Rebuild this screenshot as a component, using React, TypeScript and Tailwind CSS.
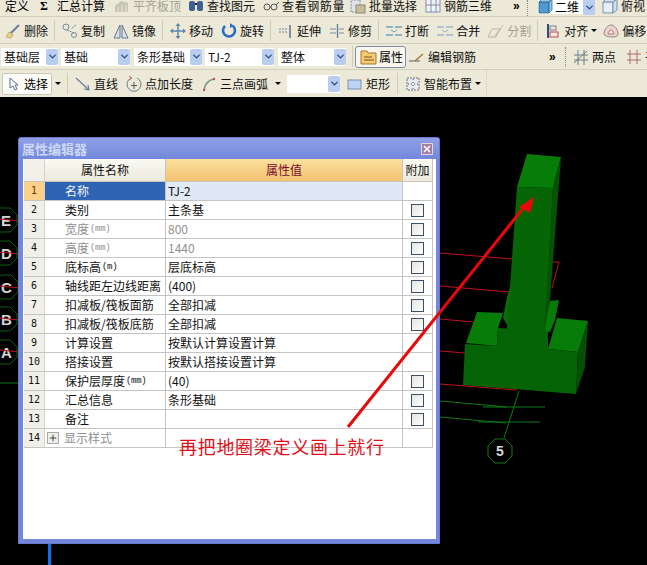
import type { ReactNode } from "react";
import { ChevronDown, Plus, X } from "lucide-react";

type Row = { name: string; unit?: string; value: string; check?: boolean; gray?: boolean };

const rows: Row[] = [
  { name: "名称", value: "TJ-2" },
  { name: "类别", value: "主条基", check: true },
  { name: "宽度", unit: "(mm)", value: "800", check: true, gray: true },
  { name: "高度", unit: "(mm)", value: "1440", check: true, gray: true },
  { name: "底标高", unit: "(m)", value: "层底标高", check: true },
  { name: "轴线距左边线距离", value: "(400)", check: true },
  { name: "扣减板/筏板面筋", value: "全部扣减", check: true },
  { name: "扣减板/筏板底筋", value: "全部扣减", check: true },
  { name: "计算设置", value: "按默认计算设置计算" },
  { name: "搭接设置", value: "按默认搭接设置计算" },
  { name: "保护层厚度", unit: "(mm)", value: "(40)", check: true },
  { name: "汇总信息", value: "条形基础", check: true },
  { name: "备注", value: "", check: true },
];

function octagon(cx: number, cy: number, r: number) {
  const pts: string[] = [];
  for (let i = 0; i < 8; i++) {
    const a = ((i + 0.5) * Math.PI) / 4;
    pts.push(`${(cx + r * Math.cos(a)).toFixed(1)},${(cy + r * Math.sin(a)).toFixed(1)}`);
  }
  return pts.join(" ");
}

function Sep(props: { className?: string }) {
  return <div className={`mx-[6px] h-[21px] w-px shrink-0 bg-[#cfccb8] ${props.className ?? ""}`} />;
}

function Caret(props: { className?: string }) {
  return <span className={`h-0 w-0 shrink-0 border-x-[3px] border-t-[3px] border-x-transparent border-t-black ${props.className ?? ""}`} />;
}

function Tool(props: { icon: ReactNode; label: string; dim?: boolean; className?: string }) {
  const { icon, label, dim, className } = props;
  return (
    <div className={`flex shrink-0 items-center gap-[2px] whitespace-nowrap ${dim ? "text-[#a5a394]" : "text-[#111]"} ${className ?? ""}`}>
      <span className="flex size-[18px] shrink-0 items-center justify-center">{icon}</span>
      <span>{label}</span>
    </div>
  );
}

function Arrow() {
  return (
    <span className="flex h-[16px] w-[12px] shrink-0 items-center justify-center rounded-[2px] bg-[#b9cdf1]">
      <ChevronDown className="size-[11px] text-[#2c4a86]" strokeWidth={3} />
    </span>
  );
}

function Combo(props: { label: string; className: string }) {
  return (
    <div className={`flex h-[18px] shrink-0 items-center justify-between bg-white pl-[3px] text-[#111] ${props.className}`}>
      <span className="whitespace-nowrap">{props.label}</span>
      <Arrow />
    </div>
  );
}

function Glyph(props: { children: ReactNode }) {
  return (
    <svg width="18" height="18" viewBox="0 0 18 18" fill="none">
      {props.children}
    </svg>
  );
}

function Toolbars() {
  return (
    <div className="h-[97px] overflow-hidden bg-[#ece9d8] font-['Noto_Sans_CJK_SC','Liberation_Sans',sans-serif] text-[12px] leading-none">
      <div className="flex h-[17px] items-start overflow-hidden border-b border-[#d2cfbc] pl-[5px]">
        <span className="shrink-0">定义</span>
        <span className="ml-[11px] w-[10px] shrink-0 font-['Liberation_Serif',serif] text-[12px] font-bold">Σ</span>
        <span className="ml-[7px] shrink-0">汇总计算</span>
        <Tool dim className="ml-[8px] -mt-[3px]" label="平齐板顶" icon={<Glyph><path d="M2 15V9l6-5 7 2v9z" fill="#c7c5b6" /><path d="M5 10v5M9 8v7M13 8v7" stroke="#ece9d8" /></Glyph>} />
        <Tool className="ml-[6px] -mt-[3px]" label="查找图元" icon={<Glyph><rect x="2" y="4" width="6" height="10" rx="2" fill="#3f5f8e" /><rect x="10" y="4" width="6" height="10" rx="2" fill="#3f5f8e" /><path d="M8 7h2" stroke="#222" strokeWidth="2" /></Glyph>} />
        <Tool className="ml-[7px] -mt-[3px] tracking-[0.6px]" label="查看钢筋量" icon={<Glyph><circle cx="5" cy="10" r="3" stroke="#555" /><circle cx="12" cy="10" r="3" stroke="#555" /><path d="M8 10h1M14 8l3-3" stroke="#555" /></Glyph>} />
        <Tool className="ml-[4px] -mt-[3px]" label="批量选择" icon={<Glyph><rect x="2" y="3" width="9" height="12" fill="#dfe3e8" stroke="#8390a6" strokeDasharray="2 1" /><rect x="7" y="8" width="9" height="8" fill="#c9bc9a" stroke="#8a8a7a" /></Glyph>} />
        <Tool className="ml-[7px] -mt-[3px]" label="钢筋三维" icon={<Glyph><rect x="2" y="2" width="14" height="13" fill="#f3f3ee" stroke="#7d8fb5" /><path d="M7 2v13M12 2v13M2 8h14" stroke="#7d8fb5" /></Glyph>} />
        <span className="ml-[21px] w-[7px] shrink-0 font-['Liberation_Sans',sans-serif] font-bold">»</span>
        <div className="ml-[7px] h-[16px] w-0 shrink-0 border-l border-dotted border-[#8d8b7e]" />
        <div className="ml-[10px] flex h-[14px] w-[57px] shrink-0 items-center bg-white">
          <svg width="15" height="14" viewBox="0 2 15 14" className="shrink-0"><path d="M1 4h10v11H1z" fill="#4f9bd1" stroke="#28577f" strokeWidth="0.7" /><path d="M1 4l3-3h10l-3 3zM11 4l3-3v11l-3 3z" fill="#8cc4ea" stroke="#28577f" strokeWidth="0.7" /></svg>
          <span className="ml-[2px] w-[28px] shrink-0">二维</span>
          <Arrow />
        </div>
        <Tool className="ml-[6px] -mt-[3px]" label="俯视" icon={<Glyph><path d="M2 5h10v11H2z" fill="#e8eef5" stroke="#7a93ab" /><path d="M2 5l3-3h11l-4 3zM12 5l4-3v11l-4 3z" fill="#cfe2f1" stroke="#7a93ab" /></Glyph>} />
      </div>
      <div className="mt-[1px] flex h-[26px] items-center overflow-hidden border-b border-[#d2cfbc] pl-[4px]">
        <Tool label="删除" icon={<Glyph><path d="M2 15l3-5 4 3-2 3z" fill="#f0d27a" stroke="#9c8a55" strokeWidth="0.6" /><path d="M7 11l8-8" stroke="#707aa0" strokeWidth="2" /></Glyph>} />
        <Sep />
        <Tool label="复制" icon={<Glyph><circle cx="5" cy="5" r="3" stroke="#7b8a9c" /><path d="M6 8l7 3M15 3l-5 4" stroke="#5e88b0" strokeDasharray="2 1" /><circle cx="13" cy="13" r="2.5" stroke="#7b8a9c" /></Glyph>} />
        <Tool className="ml-[7px]" label="镜像" icon={<Glyph><path d="M8 3v13H2zM10 3v13h6z" fill="#d9e0e8" stroke="#64768c" /></Glyph>} />
        <Sep />
        <Tool label="移动" icon={<Glyph><path d="M9 3v12M3 9h12" stroke="#5c85a8" strokeWidth="1.4" /><path d="M9 1L6.5 4h5zM9 17l-2.5-3h5zM1 9l3-2.5v5zM17 9l-3-2.5v5z" fill="#5c85a8" /></Glyph>} />
        <Tool className="ml-[7px]" label="旋转" icon={<Glyph><path d="M5 4a6 6 0 1 0 8 0" stroke="#2c6cc4" strokeWidth="2.6" /><path d="M10 1l4 3-4 2z" fill="#2c6cc4" /></Glyph>} />
        <Sep />
        <Tool label="延伸" icon={<Glyph><path d="M2 7h8M2 10h8" stroke="#71849c" strokeDasharray="2 1" /><path d="M13 3v13" stroke="#566a84" strokeWidth="1.4" /></Glyph>} />
        <Tool className="ml-[7px]" label="修剪" icon={<Glyph><path d="M2 7h6M2 11h6M11 7h5M11 11h5" stroke="#7b90a8" /><path d="M9.5 2v14" stroke="#6b8098" strokeWidth="1.4" /></Glyph>} />
        <Sep />
        <Tool label="打断" icon={<Glyph><path d="M1 5h16M1 13h16" stroke="#6fa0c0" strokeWidth="1.6" strokeDasharray="7 2" /><path d="M6 8l3 2 3-2" stroke="#6fa0c0" /></Glyph>} />
        <Tool className="ml-[7px]" label="合并" icon={<Glyph><path d="M1 5h16M1 13h16" stroke="#9eb6c7" strokeWidth="1.6" strokeDasharray="7 2" /><path d="M6 8l3 2 3-2" stroke="#9eb6c7" /></Glyph>} />
        <Tool dim className="ml-[7px]" label="分割" icon={<Glyph><path d="M1 15l4-8h8l-4 8zM8 14l8-11" stroke="#b8b6a8" /></Glyph>} />
        <Sep />
        <Tool label="对齐" icon={<Glyph><path d="M4 2v14" stroke="#30507a" strokeWidth="2" /><rect x="6" y="4" width="6" height="4" stroke="#7a7d86" /><rect x="6" y="10" width="8" height="5" stroke="#c0485c" /></Glyph>} />
        <Caret className="ml-[3px]" />
        <Tool className="ml-[5px]" label="偏移" icon={<Glyph><path d="M2 12c0-5 4-9 7-9s7 4 7 9-14 3-14 0z" fill="#eed3d0" stroke="#8b8b8b" /><path d="M6 12c0-2 2-4 3-4s3 2 3 4z" fill="#f6e6e2" stroke="#b07070" /></Glyph>} />
      </div>
      <div className="flex h-[26px] items-center overflow-hidden border-b border-[#d2cfbc] pl-[1px]">
        <Combo label="基础层" className="w-[57px]" />
        <Combo label="基础" className="ml-[3px] w-[69px]" />
        <Combo label="条形基础" className="ml-[4px] w-[68px]" />
        <Combo label="TJ-2" className="ml-[3px] w-[69px]" />
        <Combo label="整体" className="ml-[4px] w-[68px]" />
        <Sep className="mr-[2px]" />
        <div className="flex h-[22px] w-[51px] shrink-0 items-center gap-[2px] rounded-[3px] border border-[#7f8da0] bg-[#f7f5ec] pl-[4px]">
          <svg width="17" height="16" viewBox="0 0 17 16" className="shrink-0"><path d="M1 2h6l1 2h8v11H1z" fill="#f4cb70" stroke="#a2793b" /><path d="M4 8h8M4 11h10" stroke="#7b4f25" /></svg>
          <span>属性</span>
        </div>
        <Tool className="ml-[2px]" label="编辑钢筋" icon={<Glyph><path d="M1 13h11" stroke="#5a5a5a" /><path d="M7 13l8-7" stroke="#a47a40" strokeWidth="1.6" /></Glyph>} />
        <span className="ml-[73px] w-[8px] shrink-0 font-['Liberation_Sans',sans-serif] font-bold">»</span>
        <div className="ml-[8px] h-[20px] w-0 shrink-0 border-l border-dotted border-[#8d8b7e]" />
        <Tool className="ml-[6px]" label="两点" icon={<Glyph><path d="M2 15L15 3M6 2v15M12 2v15M2 7h14M2 12h14" stroke="#6f7f86" /></Glyph>} />
        <Tool className="ml-[9px]" label="平" icon={<Glyph><path d="M5 2v14M12 2v14M2 6h14M2 12h14" stroke="#b06a70" /></Glyph>} />
      </div>
      <div className="flex h-[27px] items-center overflow-hidden pl-[2px]">
        <div className="flex h-[22px] w-[50px] shrink-0 items-center rounded-[2px] border border-[#c9c7b6] bg-[#fbfbf7] pl-[5px]">
          <svg width="12" height="15" viewBox="0 0 12 15" className="shrink-0"><path d="M2 2v10l3-2 2 4 2-1-2-4h3z" fill="#fff" stroke="#5a6f8d" /></svg>
          <span className="ml-[4px] shrink-0">选择</span>
        </div>
        <Caret className="ml-[3px]" />
        <Sep />
        <Tool label="直线" icon={<Glyph><path d="M2 3l13 12M15 15l-5-1M15 15l-1-5" stroke="#6b7f96" strokeWidth="1.2" /></Glyph>} />
        <Tool className="ml-[7px]" label="点加长度" icon={<Glyph><path d="M6 3a7 7 0 1 0 6 0" stroke="#6b7f96" /><path d="M9 7v7M6 10.5h6" stroke="#555" /><path d="M4 1l3 2-3 2" stroke="#b06b50" /></Glyph>} />
        <Tool className="ml-[7px]" label="三点画弧" icon={<Glyph><path d="M4 16C4 10 8 5 14 4" stroke="#7a9a80" strokeWidth="1.6" /><circle cx="4" cy="15" r="1.2" fill="#c05050" /><circle cx="14" cy="4" r="1.2" fill="#c05050" /></Glyph>} />
        <Caret className="ml-[7px]" />
        <div className="ml-[6px] flex h-[18px] w-[53px] shrink-0 items-center justify-end bg-white">
          <Arrow />
        </div>
        <Tool className="ml-[6px]" label="矩形" icon={<Glyph><rect x="2" y="5" width="13" height="9" fill="#bcd4f2" stroke="#7a92b4" /></Glyph>} />
        <Sep className="ml-[7px]" />
        <Tool label="智能布置" icon={<Glyph><rect x="3" y="3" width="12" height="12" fill="#e6eaf0" stroke="#6e6e6e" strokeDasharray="2 1" /><path d="M9 4v10M4 9h10" stroke="#3a4a66" strokeDasharray="1 2" /></Glyph>} />
        <Caret className="ml-[3px]" />
        <div className="ml-[5px] h-full w-px shrink-0 bg-[#dcd9c6]" />
      </div>
    </div>
  );
}

function Scene() {
  return (
    <svg className="absolute left-0 top-0" width="647" height="565" viewBox="0 0 647 565" fill="none">
      <g stroke="#c01020" strokeWidth="1">
        <path d="M0 219l20 2M0 252l20 2M0 286l20 2M0 318l20 2M0 350l20 2" />
        <path d="M440 253l72 6M553 262h6l-7 26M440 286l70 6M440 319l33 3M440 351l25 2M440 384l77 6" />
      </g>
      <g stroke="#0f7a18" strokeWidth="1">
        <path d="M440 401l67 6M483 407h62M440 417l66 6M478 422h62M519 391l-15 47M0 383h20" />
        <polygon points={octagon(500, 451, 13)} />
      </g>
      <g stroke="#0c5c12" strokeWidth="1">
        <polygon points={octagon(5, 220, 13)} />
        <polygon points={octagon(5, 253, 13)} />
        <polygon points={octagon(6, 287, 13)} />
        <polygon points={octagon(5, 319, 13)} />
        <polygon points={octagon(5, 352, 13)} />
      </g>
      <polygon points="507,297 512,280 517,280 510,330 503,318" fill="#056e05" />
      <polygon points="550,301 559,300 555,320 550,332 542,331" fill="#077a07" />
      <polygon points="517,187 553,188 545,332 507,330" fill="#066606" />
      <polygon points="527,154 561,157 553,188 517,187" fill="#087c08" />
      <polygon points="561,157 553,188 544,332 550,300" fill="#055405" />
      <polygon points="477,312 503,313 498,328 497,346 466,343" fill="#087c08" />
      <polygon points="557,318 588,321 578,352 548,349" fill="#087c08" />
      <polygon points="465,344 497,346 498,328 548,331 548,349 578,352 576,394 463,385" fill="#056405" />
      <polygon points="588,321 585,367 576,394 578,352" fill="#054f05" />
    </svg>
  );
}

function Bubble(props: { label: string; className: string }) {
  return (
    <span className={`absolute left-[1px] font-['Liberation_Sans',sans-serif] text-[15px] font-bold leading-none text-[#d6d6d6] ${props.className}`}>
      {props.label}
    </span>
  );
}

function Cell(props: { className?: string; children?: ReactNode }) {
  return <div className={`flex shrink-0 items-center whitespace-nowrap border-r border-[#c4c4c4] ${props.className ?? ""}`}>{props.children}</div>;
}

function Editor() {
  return (
    <div className="absolute left-[18px] top-[137px] h-[407px] w-[422px] rounded-t-[3px] border border-[#6b77c9] bg-[#7388dc] font-['Noto_Sans_CJK_SC','Liberation_Sans',sans-serif] text-[12px] leading-none text-[#111]">
      <div className="flex h-[21px] items-center justify-between bg-gradient-to-b from-[#8ea0e6] to-[#7388dc] pl-[3px] pr-[6px] text-[#cdd9f2]">
        <span className="text-[13px] font-bold">属性编辑器</span>
        <span className="flex size-[12px] items-center justify-center rounded-[1px] border border-white/70 bg-[#a27da4]">
          <X className="size-[10px] text-white" strokeWidth={4} />
        </span>
      </div>
      <div className="ml-[4px] mr-[3px] h-[380px] bg-white pl-px">
        <div className="w-[409px] border-r border-[#c4c4c4]">
          <div className="flex h-[23px] border-b border-[#c8c6b8]">
            <Cell className="w-[21px] border-[#d6d3c5] bg-[#f2f1e9]" />
            <Cell className="w-[121px] justify-center bg-gradient-to-b from-[#fafaf3] to-[#ece9dc]">属性名称</Cell>
            <Cell className="w-[237px] justify-center bg-gradient-to-b from-[#fbe09e] to-[#f2c270] text-[#7a0c2e]">属性值</Cell>
            <div className="flex flex-1 items-center justify-center whitespace-nowrap bg-gradient-to-b from-[#fafaf3] to-[#ece9dc]">附加</div>
          </div>
          {rows.map((row, i) => (
            <div key={row.name} className="flex h-[19px] border-b border-[#c4c4c4]">
              <Cell className={`w-[21px] justify-center border-[#d6d3c5] font-['DejaVu_Sans_Mono',monospace] text-[10px] ${i === 0 ? "bg-[#fbd08a] text-[#7a3010]" : "bg-[#f1f0e8]"}`}>{i + 1}</Cell>
              <Cell className={`w-[121px] ${i === 0 ? "bg-[#2f64b4] pl-[20px] text-[#f0f4fb]" : "pl-[20px]"} ${row.gray ? "text-[#8f8f8f]" : ""}`}>
                {row.name}
                {row.unit && <span className="ml-[1px] font-['Liberation_Mono',monospace] text-[9px] tracking-[-0.3px]">{row.unit}</span>}
              </Cell>
              <Cell className={`w-[237px] pl-[2px] ${i === 0 ? "bg-[#e0e8f5]" : ""} ${row.gray ? "text-[#8f8f8f]" : ""}`}>{row.value}</Cell>
              <div className="flex flex-1 items-center justify-center">
                {row.check && <span className="size-[13px] border border-[#3b5068] bg-gradient-to-br from-[#e4e4de] to-white" />}
              </div>
            </div>
          ))}
          <div className="flex h-[19px] border-b border-[#c4c4c4]">
            <Cell className="w-[21px] justify-center border-[#d6d3c5] bg-[#f1f0e8] font-['DejaVu_Sans_Mono',monospace] text-[10px]">14</Cell>
            <Cell className="w-[121px] pl-[2px] text-[#8f8f8f]">
              <span className="mr-[5px] flex size-[12px] items-center justify-center border border-[#a8a8a8] bg-[#f0f0ea]">
                <Plus className="size-[10px] text-[#222]" strokeWidth={2} />
              </span>
              显示样式
            </Cell>
            <Cell className="w-[237px]" />
          </div>
        </div>
      </div>
    </div>
  );
}

export default function App() {
  return (
    <div className="relative h-[565px] w-[647px] overflow-hidden bg-black">
      <Toolbars />
      <Bubble label="E" className="top-[213px]" />
      <Bubble label="D" className="top-[246px]" />
      <Bubble label="C" className="top-[280px]" />
      <Bubble label="B" className="top-[312px]" />
      <Bubble label="A" className="top-[345px]" />
      <Scene />
      <Editor />
      <span className="absolute left-[179px] top-[437px] whitespace-nowrap font-['Noto_Sans_CJK_SC',sans-serif] text-[18px] leading-none tracking-[0.7px] text-[#e01018]">再把地圈梁定义画上就行</span>
      <svg className="absolute left-0 top-0" width="647" height="565" viewBox="0 0 647 565" fill="none">
        <path d="M348 427L525 206" stroke="#e8080a" strokeWidth="3" />
        <polygon points="534,197 519,207 530,213" fill="#e8080a" />
      </svg>
      <span className="absolute left-[496px] top-[444px] font-['Liberation_Sans',sans-serif] text-[14px] font-bold leading-none text-[#d6d6d6]">5</span>
      <div className="absolute left-[48px] top-[544px] h-[21px] w-[3px] bg-[#1070f0]" />
    </div>
  );
}
